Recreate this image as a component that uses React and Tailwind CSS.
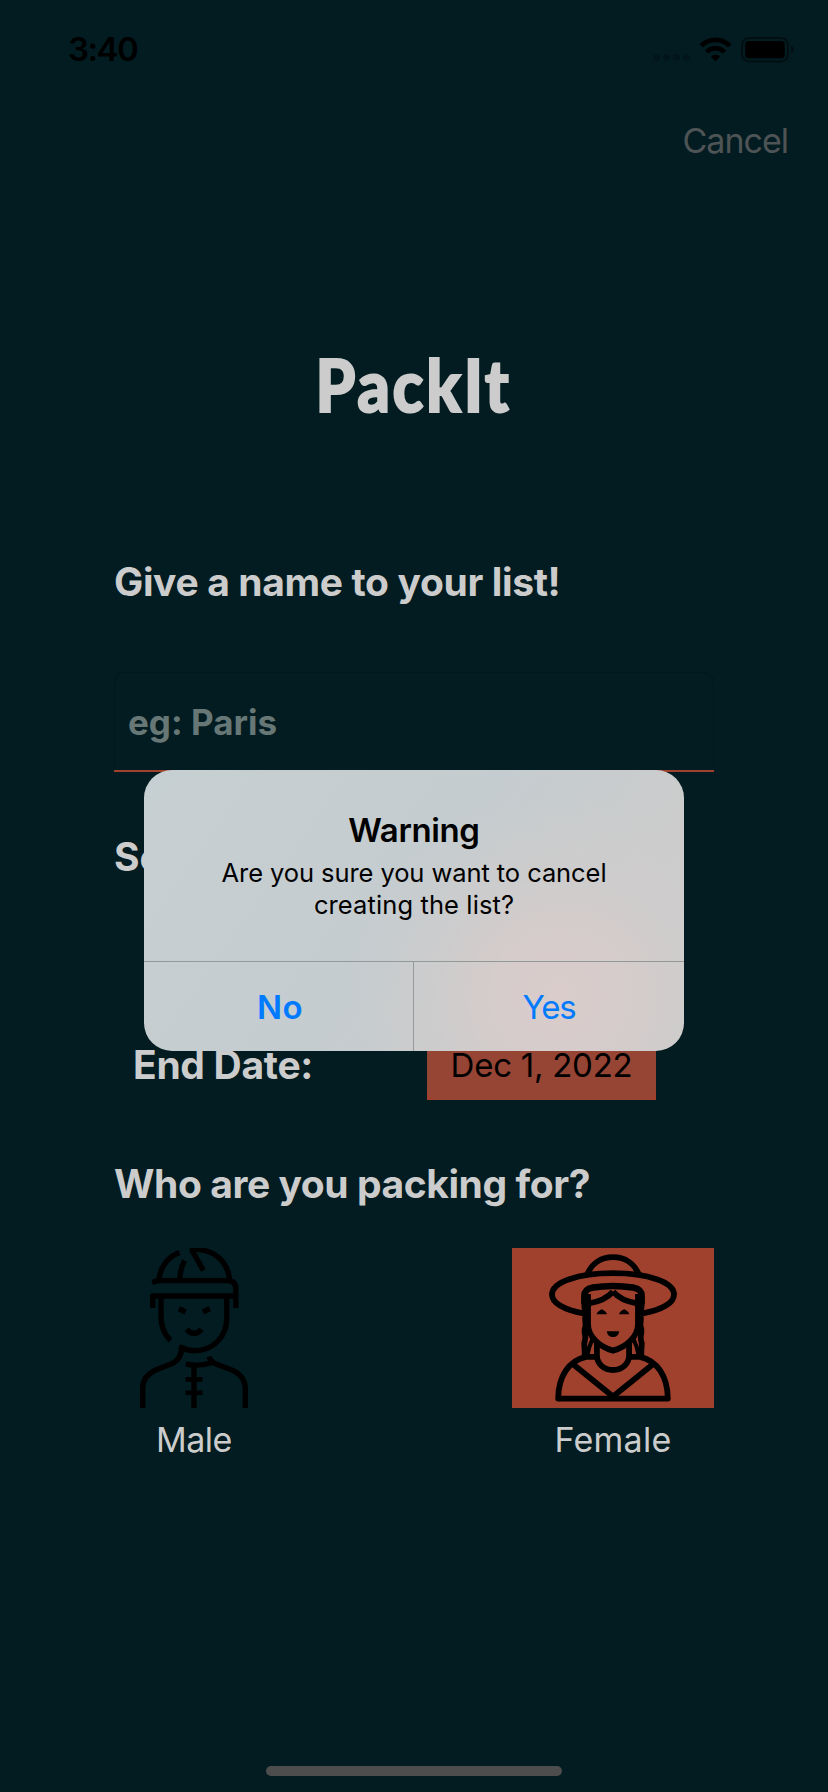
import React from "react";

function StatusIcons() {
  return (
    <svg width="140" height="26" viewBox="0 0 140 26" fill="none">
      <g fill="#02151a">
        <circle cx="2.8" cy="20.5" r="3.3" />
        <circle cx="12.5" cy="20.5" r="3.3" />
        <circle cx="22.5" cy="20.5" r="3.3" />
        <circle cx="32.5" cy="20.5" r="3.3" />
      </g>
      <path d="M47.2 8.9a20.2 20.2 0 0 1 28.6 0" stroke="#000" strokeWidth="4.8" />
      <path d="M52.5 15a12.6 12.6 0 0 1 18 0" stroke="#000" strokeWidth="4.6" />
      <path d="M56.9 19.6a6.6 6.6 0 0 1 9.2 0L61.5 24.4z" fill="#000" />
      <rect x="88" y="1" width="46" height="23.4" rx="7" stroke="#020f12" strokeWidth="2" />
      <rect x="91.2" y="4.1" width="39.6" height="17.2" rx="3.6" fill="#000" />
      <path d="M137 8.8c1.8.8 2.8 2.2 2.8 3.9s-1 3.1-2.8 3.9z" fill="#020f12" />
    </svg>
  );
}

function MaleIcon() {
  return (
    <svg width="160" height="160" viewBox="0 0 160 160" fill="none" stroke="#000" strokeWidth="5.4" strokeLinejoin="round">
      <path d="M45 32C46 19 54 9 65.5 4.6" />
      <path d="M76 1.8C98 -1 114 13 115.6 32" />
      <path d="M77.5 1.5L89.4 22.5" />
      <path d="M70.6 12.6C67.5 18 66 24 65.8 31" />
      <path d="M38.2 34.4L44 32.6H113.5C119 32.6 121.8 35.5 121.8 40.5V60" />
      <path d="M38.7 60V48H121.7" />
      <path d="M47 48V69C47 78 50 86 56.5 92.5" />
      <path d="M112.8 48V70C112.8 90 98 102.8 80 102.8C75.5 102.8 71 101.6 67.4 99.4C67.6 107 64 113 57.5 115.8L43.5 121.3C34 125.3 28.7 131 28.7 140V160" />
      <path d="M95 108.6C96 112.4 98.2 114.6 102 116L116 121.3C126 125 131.3 131.5 131.3 141V160" />
      <path d="M71.8 116.2C82 118 92 117 101 113.8" />
      <path d="M80 117V160" />
      <path d="M71.6 131.4H88.4M71.6 144.8H88.4" strokeWidth="4.6" />
      <path d="M64.8 60.6L71.6 64M95.8 60.6L89 64" />
      <path d="M72.8 81.2C76.5 86.6 84 86.6 87.4 81.2" />
    </svg>
  );
}

function FemaleIcon() {
  return (
    <svg width="202" height="160" viewBox="0 0 202 160" fill="none" stroke="#000" strokeWidth="5.8" strokeLinejoin="round">
      <path d="M71.5 65.4C52 62 40 55 40 46.4C40 34 66 25.2 101 25.2C136 25.2 162 34 162 46.4C162 55 150 62 130.5 65.4" />
      <path d="M75 27C79.5 15.5 89 9.2 101 9.2C113 9.2 122.5 15.5 127 27" />
      <path d="M72.4 56V48C72.4 42.5 75.5 40.6 81 39.6C94 37.6 108 37.6 121 39.6C126.5 40.6 129.6 42.5 129.6 48V56" strokeWidth="6.6" />
      <path d="M101 43.6C95.5 50 88.5 53.4 77 55.4M101 43.6C106.500 50 113.500 53.4 125 55.4" />
      <path d="M76 46V76C76 89 88 99 101 102.6C114 99 126 89 126 76V46" />
      <path d="M72.8 54C70.600 60 75 63 73.5 68C72 72 74.600 75 73.300 79C71 84 74.500 88 73 92C70.800 97 73.800 101 72.400 109" strokeWidth="5.8" />
      <path d="M129.200 54C131.400 60 127 63 128.500 68C130 72 127.400 75 128.700 79C131 84 127.500 88 129 92C131.200 97 128.200 101 129.600 109" strokeWidth="5.8" />
      <path d="M80.500 91C77.500 97 76.500 101 75.500 107M121.500 91C124.500 97 125.500 101 126.500 107" strokeWidth="4" />
      <path d="M84.900 94V107C84.900 116 92 122 101 122C110 122 117.100 116 117.100 107V94" />
      <path d="M85 108.800H74C57 112.500 46.300 128 46.200 150.600H155.800C155.700 128 145 112.500 128 108.800H117" />
      <path d="M62 117L101 148.500L140 117" />
      <path d="M84.600 66.200C86 62.600 88.600 62 89.800 61.200C91 62 93.600 62.600 95 66.200zM107 66.200C108.400 62.600 111 62 112.200 61.200C113.400 62 116 62.600 117.400 66.200z" fill="#000" stroke="none" />
      <path d="M94.800 83.200H107.200C106.600 91 95.400 91 94.800 83.200z" fill="#000" stroke="none" />
    </svg>
  );
}

function Alert() {
  return (
    <div className="absolute top-[770px] left-[144px] flex h-[281px] w-[540px] flex-col overflow-hidden rounded-[28px] bg-[radial-gradient(ellipse_210px_200px_at_415px_225px,#d9cccb_0%,#d6cccb_28%,rgba(208,204,204,0.6)_60%,rgba(204,204,204,0)_100%),linear-gradient(125deg,#c6cfd1_0%,#c5cccf_50%,#cccccc_78%,#cdcccc_100%)] text-black">
      <div className="h-[191px] pt-10 text-center">
        <h2 className="h-10 text-[33px] leading-10 font-semibold tracking-[-0.37px]">Warning</h2>
        <p className="mt-[7px] text-[25.5px] leading-8">
          <span className="tracking-[-0.08px]">Are you sure you want to cancel</span>
          <br />
          <span className="tracking-[0.11px]">creating the list?</span>
        </p>
      </div>
      <div className="grid h-[90px] grid-cols-2 border-t border-[#929999] text-[33px] text-[#007aff]">
        <button className="border-r border-[#989b9c] pt-[2px] pl-[3px] font-semibold tracking-[0.5px]">No</button>
        <button className="pt-[2px] tracking-[-1.2px]">Yes</button>
      </div>
    </div>
  );
}

const heading = "h-12 text-[39px] leading-[48px] font-bold whitespace-nowrap";

export default function App() {
  return (
    <div className="relative flex h-[1792px] w-[828px] flex-col overflow-hidden bg-[#021c21] font-['Inter',sans-serif] text-[#cccccc]">
      <header className="flex h-[100px] items-center justify-between pr-[34px] pl-[68px]">
        <span className="text-[33px] font-semibold tracking-[-1.5px] text-black">3:40</span>
        <StatusIcons />
      </header>
      <nav className="flex h-20 items-center justify-end pr-[40px] text-[34px] tracking-[-1px] text-[#4e5355]">Cancel</nav>
      <h1 className="mt-[154px] h-[100px] text-center font-['Lato',sans-serif] text-[72px] leading-[100px] font-black">
        <span className="inline-block scale-x-[0.887] tracking-[3px] [-webkit-text-stroke:2px_#cccccc]">PackIt</span>
      </h1>

      <main className="mx-[114px] mt-[124px] flex flex-col">
        <h2 className={`${heading} tracking-[-0.36px]`}>Give a name to your list!</h2>
        <div className="mt-[66px] flex h-[100px] items-center rounded-t-[10px] border-x border-t border-b-2 border-x-[#02181c] border-t-[#02181c] border-b-transparent pl-[13px]">
          <span className="pt-[2px] text-[35px] font-bold text-[#677776]">eg: Paris</span>
        </div>
        <div className="-mt-[2px] h-[2px] bg-[#a0412d]" />
        <h2 className={`${heading} mt-[61px]`}>Se</h2>
        <div className="mt-[149px] flex h-[70px] items-center justify-between pr-[58px] pl-[19px]">
          <span className="text-[39px] font-bold tracking-[-0.3px]">End Date:</span>
          <div className="h-[70px] w-[229px] bg-[#a0412d]">
            <div className="flex h-full items-center justify-center rounded-[12px] bg-[#964434] pt-px text-[33px] tracking-[-0.25px] text-black">Dec 1, 2022</div>
          </div>
        </div>
        <h2 className={`${heading} mt-[60px] tracking-[-0.43px]`}>Who are you packing for?</h2>
        <div className="mt-10 flex justify-between text-[34px]">
          <div className="flex flex-col items-center">
            <MaleIcon />
            <span className="mt-2 h-12 leading-[48px] tracking-[-0.5px]">Male</span>
          </div>
          <div className="flex flex-col items-center">
            <div className="bg-[#a0412d]">
              <FemaleIcon />
            </div>
            <span className="mt-2 h-12 leading-[48px] tracking-[0.27px]">Female</span>
          </div>
        </div>
      </main>

      <div className="mx-auto mt-auto mb-4 h-[10px] w-[296px] rounded-full bg-[#4d4d4d]" />
      <Alert />
    </div>
  );
}
